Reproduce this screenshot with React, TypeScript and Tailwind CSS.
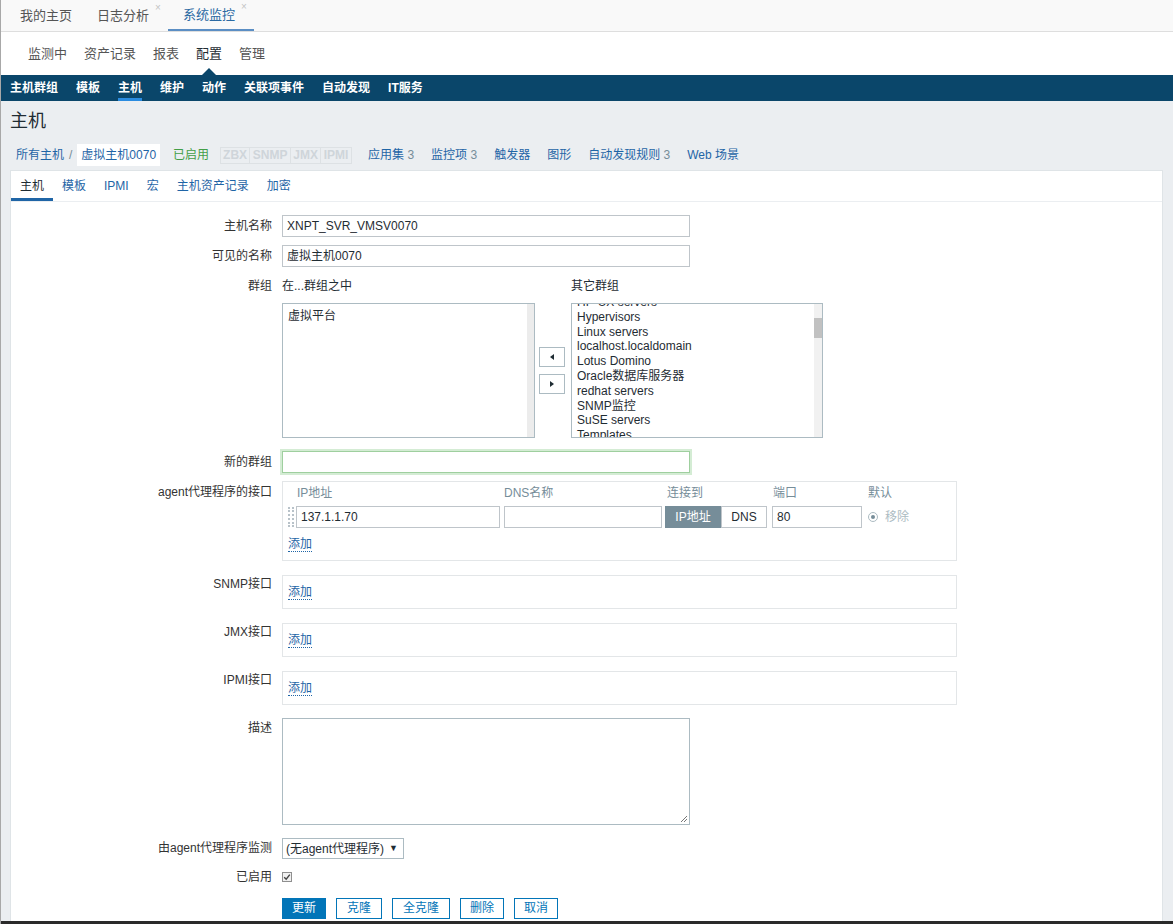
import React from 'react';

const topTabs = [
  { name: '我的主页', close: false, active: false },
  { name: '日志分析', close: true, active: false },
  { name: '系统监控', close: true, active: true },
];

const subMenu = ['监测中', '资产记录', '报表', '配置', '管理'];
const navItems = ['主机群组', '模板', '主机', '维护', '动作', '关联项事件', '自动发现', 'IT服务'];
const formTabs = ['主机', '模板', 'IPMI', '宏', '主机资产记录', '加密'];
const otherGroups = [
  'HP-UX servers',
  'Hypervisors',
  'Linux servers',
  'localhost.localdomain',
  'Lotus Domino',
  'Oracle数据库服务器',
  'redhat servers',
  'SNMP监控',
  'SuSE servers',
  'Templates',
  'Virtual machines',
];

function Row({
  label,
  labelPt = 'pt-[4px]',
  className = '',
  children,
}: {
  label: string;
  labelPt?: string;
  className?: string;
  children: React.ReactNode;
}) {
  return (
    <div className={`flex ${className}`}>
      <div className={`w-[271px] shrink-0 pr-[10px] text-right leading-[14px] text-[#333] ${labelPt}`}>{label}</div>
      <div className="flex-1">{children}</div>
    </div>
  );
}

function AddLink() {
  return <span className="border-b border-dotted border-[#1f65a6] leading-[14px] text-[#1f65a6]">添加</span>;
}

function EmptyInterface() {
  return (
    <div className="h-[34px] w-[675px] border border-[#e3e6e8] pl-[5px] pt-[9px] leading-[14px]">
      <AddLink />
    </div>
  );
}

export default function App() {
  return (
    <div className="relative h-[924px] w-[1173px] overflow-hidden border-l border-[#a8a8a8] bg-[#ebeef1] font-['Liberation_Sans','Noto_Sans_CJK_SC',sans-serif] text-[12px] text-[#1f2c33]">
      {/* top tabs */}
      <div className="flex h-[32px] items-stretch border-b border-[#dedede] bg-[#f9f9f9] pl-[4px] text-[13px] text-[#555]">
        {topTabs.map((t) => (
          <div
            key={t.name}
            className={`flex items-center pl-[15px] ${t.close ? 'pr-[7px]' : 'pr-[10px]'} ${
              t.active ? 'border-b-2 border-[#5b8ec4] text-[#2b6aa3]' : ''
            }`}
          >
            {t.name}
            {t.close && <span className="relative -top-[8px] ml-[6px] text-[10px] leading-none text-[#c4c4c4]">×</span>}
          </div>
        ))}
      </div>

      {/* sub menu */}
      <div className="flex h-[43px] items-stretch gap-[17px] bg-white pl-[27px] text-[13px] text-[#555]">
        {subMenu.map((m) => (
          <div key={m} className={`relative flex items-center ${m === '配置' ? 'text-[#1f2c33]' : ''}`}>
            {m}
            {m === '配置' && (
              <span className="absolute bottom-0 left-1/2 h-0 w-0 -translate-x-1/2 border-x-[7px] border-b-[7px] border-x-transparent border-b-[#0a466a]" />
            )}
          </div>
        ))}
      </div>

      {/* main nav */}
      <div className="flex h-[26px] items-stretch gap-[18px] bg-[#0a466a] pl-[9px] font-bold text-white">
        {navItems.map((n) => (
          <div
            key={n}
            className={`flex items-center border-y-[3px] border-t-transparent ${
              n === '主机' ? 'border-b-[#2a8be0]' : 'border-b-transparent'
            }`}
          >
            {n}
          </div>
        ))}
      </div>

      {/* title */}
      <div className="flex h-[39px] items-center pl-[9px] text-[18px] leading-none">主机</div>

      {/* breadcrumb */}
      <div className="flex h-[30px] items-center pl-[15px] leading-[14px]">
        <span className="text-[#1f65a6]">所有主机</span>
        <span className="mx-[5px] text-[#768d99]">/</span>
        <span className="bg-white px-[4px] py-[4px] text-[#1f65a6]">虚拟主机0070</span>
        <span className="ml-[13px] text-[#429e47]">已启用</span>
        <div className="ml-[11px] flex border border-[#dde1e4] text-[12px] font-bold leading-[15px] text-[#cfd5da]">
          <span className="w-[28px] text-center">ZBX</span>
          <span className="w-[41px] border-l border-[#dde1e4] text-center">SNMP</span>
          <span className="w-[30px] border-l border-[#dde1e4] text-center">JMX</span>
          <span className="w-[31px] border-l border-[#dde1e4] text-center">IPMI</span>
        </div>
        <span className="ml-[16px] text-[#1f65a6]">
          应用集 <span className="text-[#768d99]">3</span>
        </span>
        <span className="ml-[17px] text-[#1f65a6]">
          监控项 <span className="text-[#768d99]">3</span>
        </span>
        <span className="ml-[17px] text-[#1f65a6]">触发器</span>
        <span className="ml-[17px] text-[#1f65a6]">图形</span>
        <span className="ml-[17px] text-[#1f65a6]">
          自动发现规则 <span className="text-[#768d99]">3</span>
        </span>
        <span className="ml-[17px] text-[#1f65a6]">Web 场景</span>
      </div>

      {/* form panel */}
      <div className="ml-[9px] mr-[10px] border border-[#dfe4e7] bg-white">
        <div className="flex h-[31px] border-b border-[#ebeef1]">
          {formTabs.map((t, i) => (
            <div
              key={t}
              className={`h-[30px] px-[9px] pt-[8px] leading-[14px] ${
                i === 0 ? 'border-b-[3px] border-[#1f65a6] text-[#1f2c33]' : 'text-[#1f65a6]'
              }`}
            >
              {t}
            </div>
          ))}
        </div>

        <div className="pb-[40px] pt-[13px]">
          <Row label="主机名称">
            <div className="h-[22px] w-[408px] border border-[#bfc5ca] px-[4px] leading-[20px]">XNPT_SVR_VMSV0070</div>
          </Row>

          <Row label="可见的名称" className="mt-[8px]">
            <div className="h-[22px] w-[408px] border border-[#bfc5ca] px-[4px] leading-[20px]">虚拟主机0070</div>
          </Row>

          <Row label="群组" labelPt="pt-0" className="mt-[12px]">
            <div className="flex">
              <div>
                <div className="h-[24px] leading-[14px]">在...群组之中</div>
                <div className="flex h-[135px] w-[253px] border border-[#acbbc2]">
                  <div className="flex-1 pl-[5px] pt-[5px] leading-[14px]">虚拟平台</div>
                  <div className="w-[7px] bg-[#ececec]" />
                </div>
              </div>
              <div className="ml-[4px] flex flex-col justify-center gap-[7px] pt-[24px]">
                <button className="flex h-[20px] w-[26px] items-center justify-center border border-[#acbbc2] bg-white">
                  <svg width="4" height="6" viewBox="0 0 4 6">
                    <path d="M4 0 L0 3 L4 6 Z" fill="#1f2c33" />
                  </svg>
                </button>
                <button className="flex h-[20px] w-[26px] items-center justify-center border border-[#acbbc2] bg-white">
                  <svg width="4" height="6" viewBox="0 0 4 6">
                    <path d="M0 0 L4 3 L0 6 Z" fill="#1f2c33" />
                  </svg>
                </button>
              </div>
              <div className="ml-[6px]">
                <div className="h-[24px] leading-[14px]">其它群组</div>
                <div className="flex h-[135px] w-[252px] border border-[#acbbc2]">
                  <div className="flex-1 overflow-hidden pl-[5px]">
                    <div className="-mt-[9px] leading-[14.8px]">
                      {otherGroups.map((g) => (
                        <div key={g} className="whitespace-nowrap">
                          {g}
                        </div>
                      ))}
                    </div>
                  </div>
                  <div className="w-[8px] bg-[#f1f1f1]">
                    <div className="mt-[14px] h-[20px] bg-[#c1c1c1]" />
                  </div>
                </div>
              </div>
            </div>
          </Row>

          <Row label="新的群组" className="mt-[13px]">
            <div className="h-[22px] w-[408px] border border-[#9fcf9f] shadow-[0_0_0_2px_#d4ecd4]" />
          </Row>

          <Row label="agent代理程序的接口" className="mt-[8px]">
            <div className="h-[80px] w-[675px] border border-[#e3e6e8] pl-[5px] pt-[4px]">
              <div className="flex h-[14px] leading-[14px] text-[#768d99]">
                <div className="w-[9px]" />
                <div className="w-[207px]">IP地址</div>
                <div className="w-[163px]">DNS名称</div>
                <div className="w-[106px]">连接到</div>
                <div className="w-[95px]">端口</div>
                <div>默认</div>
              </div>
              <div className="mt-[6px] flex h-[22px] items-center">
                <div className="h-[20px] w-[6px] border-x-2 border-dotted border-[#b8c2c9]" />
                <div className="ml-[2px] h-[22px] w-[204px] border border-[#bfc5ca] px-[4px] leading-[20px]">137.1.1.70</div>
                <div className="ml-[4px] h-[22px] w-[158px] border border-[#bfc5ca]" />
                <div className="ml-[3px] flex h-[22px]">
                  <div className="flex w-[56px] items-center justify-center border border-[#768d99] bg-[#768d99] text-white">
                    IP地址
                  </div>
                  <div className="flex w-[46px] items-center justify-center border border-[#bfc5ca]">DNS</div>
                </div>
                <div className="ml-[5px] h-[22px] w-[90px] border border-[#bfc5ca] px-[4px] leading-[20px]">80</div>
                <div className="ml-[6px] flex h-[10px] w-[10px] items-center justify-center rounded-full border border-[#acbbc2]">
                  <div className="h-[4px] w-[4px] rounded-full bg-[#768d99]" />
                </div>
                <span className="ml-[7px] text-[#acbbc2]">移除</span>
              </div>
              <div className="mt-[9px] leading-[14px]">
                <AddLink />
              </div>
            </div>
          </Row>

          <Row label="SNMP接口" labelPt="pt-[2px]" className="mt-[14px]">
            <EmptyInterface />
          </Row>

          <Row label="JMX接口" labelPt="pt-[2px]" className="mt-[14px]">
            <EmptyInterface />
          </Row>

          <Row label="IPMI接口" labelPt="pt-[2px]" className="mt-[14px]">
            <EmptyInterface />
          </Row>

          <Row label="描述" labelPt="pt-[3px]" className="mt-[13px]">
            <div className="flex h-[107px] w-[408px] items-end justify-end border border-[#acbbc2] p-[1px]">
              <svg width="9" height="9" viewBox="0 0 9 9">
                <path d="M8 2 L2 8 M8 5 L5 8" stroke="#777" strokeWidth="1" />
              </svg>
            </div>
          </Row>

          <Row label="由agent代理程序监测" labelPt="pt-[3px]" className="mt-[13px]">
            <div className="flex h-[21px] w-[122px] items-center border border-[#acbbc2] pl-[3px]">
              <span>(无agent代理程序)</span>
              <span className="ml-auto mr-[5px] text-[9px]">▼</span>
            </div>
          </Row>

          <Row label="已启用" labelPt="pt-0" className="mt-[11px]">
            <div className="mt-[2px] flex h-[10px] w-[10px] items-center justify-center border border-[#8f8f8f] bg-[#f1f1f1]">
              <svg width="8" height="8" viewBox="0 0 8 8">
                <path d="M1.2 4.2 L3.2 6.2 L6.8 1.6" fill="none" stroke="#444" strokeWidth="1.4" />
              </svg>
            </div>
          </Row>

          <Row label="" className="mt-[14px]">
            <div className="flex gap-[10px]">
              <button className="h-[21px] border border-[#0275b8] bg-[#0275b8] px-[9px] leading-[19px] text-white">更新</button>
              <button className="h-[21px] border border-[#0275b8] bg-white px-[10px] leading-[19px] text-[#0275b8]">克隆</button>
              <button className="h-[21px] border border-[#0275b8] bg-white px-[10px] leading-[19px] text-[#0275b8]">全克隆</button>
              <button className="h-[21px] border border-[#0275b8] bg-white px-[9px] leading-[19px] text-[#0275b8]">删除</button>
              <button className="h-[21px] border border-[#0275b8] bg-white px-[9px] leading-[19px] text-[#0275b8]">取消</button>
            </div>
          </Row>
        </div>
      </div>

      <div className="absolute bottom-0 left-0 right-0 h-[3px] bg-[#2a2a2a]" />
    </div>
  );
}
